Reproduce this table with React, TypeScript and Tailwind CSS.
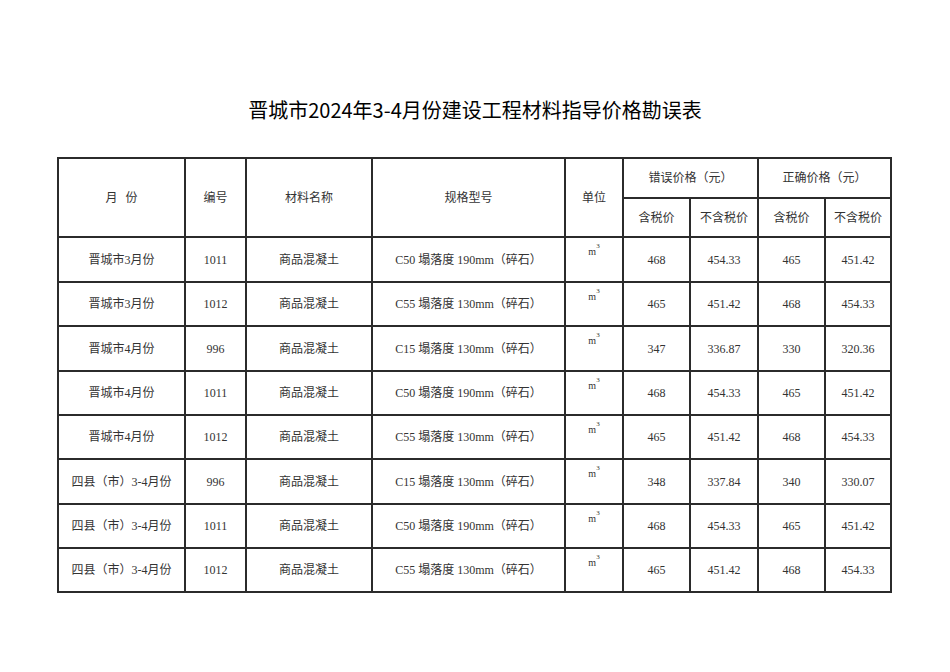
const rows = [
  { month: "晋城市3月份", code: "1011", spec: "C50 塌落度 190mm（碎石）", a: "468", b: "454.33", c: "465", d: "451.42", h: "h-[45px]" },
  { month: "晋城市3月份", code: "1012", spec: "C55 塌落度 130mm（碎石）", a: "465", b: "451.42", c: "468", d: "454.33", h: "h-[44px]" },
  { month: "晋城市4月份", code: "996", spec: "C15 塌落度 130mm（碎石）", a: "347", b: "336.87", c: "330", d: "320.36", h: "h-[45px]" },
  { month: "晋城市4月份", code: "1011", spec: "C50 塌落度 190mm（碎石）", a: "468", b: "454.33", c: "465", d: "451.42", h: "h-[44px]" },
  { month: "晋城市4月份", code: "1012", spec: "C55 塌落度 130mm（碎石）", a: "465", b: "451.42", c: "468", d: "454.33", h: "h-[44px]" },
  { month: "四县（市）3-4月份", code: "996", spec: "C15 塌落度 130mm（碎石）", a: "348", b: "337.84", c: "340", d: "330.07", h: "h-[45px]" },
  { month: "四县（市）3-4月份", code: "1011", spec: "C50 塌落度 190mm（碎石）", a: "468", b: "454.33", c: "465", d: "451.42", h: "h-[44px]" },
  { month: "四县（市）3-4月份", code: "1012", spec: "C55 塌落度 130mm（碎石）", a: "465", b: "451.42", c: "468", d: "454.33", h: "h-[44px]" },
];

const cell = "border-2 border-[#2b2b2b] text-center align-middle p-0";

export default function App() {
  return (
    <div className="min-h-[672px] w-[950px] bg-white">
      <h1 className="pt-[96px] text-center text-[20px] leading-[28px] text-black font-['Noto_Sans_CJK_SC',sans-serif]">
        晋城市2024年3-4月份建设工程材料指导价格勘误表
      </h1>

      <table className="mt-[33px] ml-[57px] w-[833px] table-fixed border-collapse text-[12px] leading-none text-[#333] font-['Liberation_Serif','Noto_Sans_CJK_SC',serif]">
        <colgroup>
          <col className="w-[127px]" />
          <col className="w-[61px]" />
          <col className="w-[126px]" />
          <col className="w-[193px]" />
          <col className="w-[58px]" />
          <col className="w-[67px]" />
          <col className="w-[68px]" />
          <col className="w-[67px]" />
          <col className="w-[66px]" />
        </colgroup>
        <thead>
          <tr className="h-[40px]">
            <th rowSpan={2} className={`${cell} font-normal`}>
              月<span className="inline-block w-2" />份
            </th>
            <th rowSpan={2} className={`${cell} font-normal`}>编号</th>
            <th rowSpan={2} className={`${cell} font-normal`}>材料名称</th>
            <th rowSpan={2} className={`${cell} font-normal`}>规格型号</th>
            <th rowSpan={2} className={`${cell} font-normal`}>单位</th>
            <th colSpan={2} className={`${cell} font-normal`}>错误价格（元）</th>
            <th colSpan={2} className={`${cell} font-normal`}>正确价格（元）</th>
          </tr>
          <tr className="h-[39px]">
            <th className={`${cell} font-normal`}>含税价</th>
            <th className={`${cell} font-normal`}>不含税价</th>
            <th className={`${cell} font-normal`}>含税价</th>
            <th className={`${cell} font-normal`}>不含税价</th>
          </tr>
        </thead>
        <tbody>
          {rows.map((r, i) => (
            <tr key={i} className={r.h}>
              <td className={cell}>{r.month}</td>
              <td className={cell}>{r.code}</td>
              <td className={cell}>商品混凝土</td>
              <td className={cell}>{r.spec}</td>
              <td className="border-2 border-[#2b2b2b] p-0 pt-[9px] text-center align-top text-[10px]">
                m<sup className="text-[7px] align-[4px]">3</sup>
              </td>
              <td className={cell}>{r.a}</td>
              <td className={cell}>{r.b}</td>
              <td className={cell}>{r.c}</td>
              <td className={cell}>{r.d}</td>
            </tr>
          ))}
        </tbody>
      </table>
    </div>
  );
}
